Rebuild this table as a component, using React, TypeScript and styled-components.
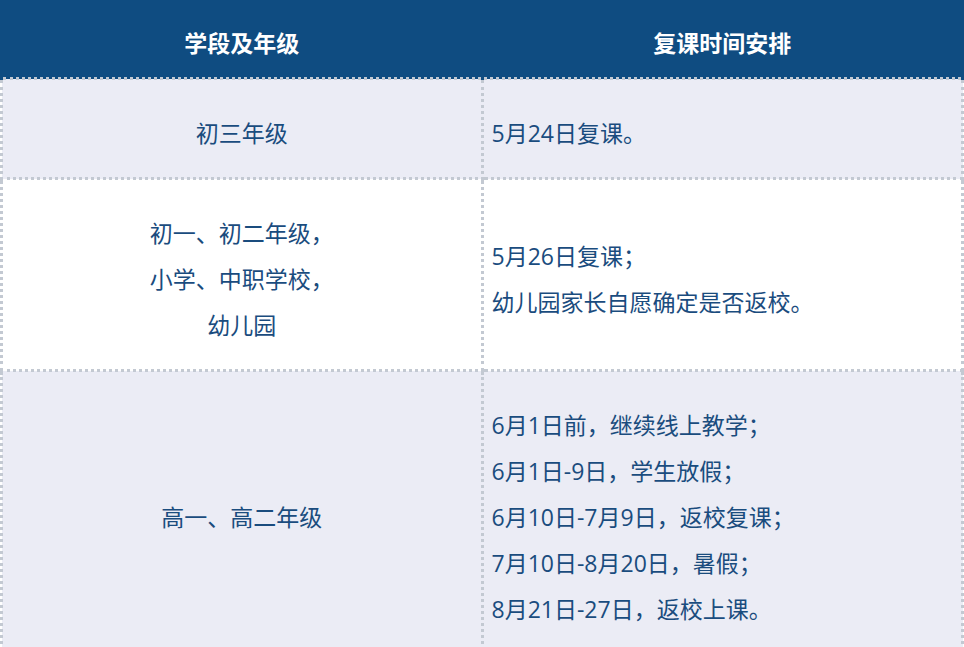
import styled, { createGlobalStyle } from 'styled-components';

const GlobalStyle = createGlobalStyle`
  html, body {
    margin: 0;
    padding: 0;
    background: #ffffff;
    overflow: hidden;
  }
  body {
    font-family: "Open Sans", "Noto Sans CJK SC", sans-serif;
  }
`;

const Table = styled.table`
  width: 964px;
  border-collapse: collapse;
  table-layout: fixed;
  font-size: 23px;
  color: #1a4c7e;
`;

const HeadCell = styled.th`
  height: 71px;
  padding: 6px 0 0;
  background: #0f4c81;
  color: #ffffff;
  font-weight: 700;
  text-align: center;
  vertical-align: middle;
  border-left: 3px solid #0f4c81;
  border-right: 3px solid #0f4c81;
  border-bottom: 3px dotted #c3c9d2;
`;

const Row = styled.tr<{ $shaded: boolean }>`
  background: ${p => (p.$shaded ? '#ebecf5' : '#ffffff')};
`;

const Cell = styled.td<{ $align: 'center' | 'left' }>`
  padding: 30px 8px 21px;
  line-height: 46px;
  text-align: ${p => p.$align};
  vertical-align: middle;
  border: 3px dotted #c3c9d2;
`;

const Line = styled.div``;

const rows = [
  { grade: ['初三年级'], plan: ['5月24日复课。'] },
  {
    grade: ['初一、初二年级，', '小学、中职学校，', '幼儿园'],
    plan: ['5月26日复课；', '幼儿园家长自愿确定是否返校。'],
  },
  {
    grade: ['高一、高二年级'],
    plan: [
      '6月1日前，继续线上教学；',
      '6月1日-9日，学生放假；',
      '6月10日-7月9日，返校复课；',
      '7月10日-8月20日，暑假；',
      '8月21日-27日，返校上课。',
    ],
  },
];

const App = () => (
  <>
    <GlobalStyle />
    <Table>
      <thead>
        <tr>
          <HeadCell>学段及年级</HeadCell>
          <HeadCell>复课时间安排</HeadCell>
        </tr>
      </thead>
      <tbody>
        {rows.map((r, i) => (
          <Row key={i} $shaded={i % 2 === 0}>
            <Cell $align="center">
              {r.grade.map(g => (
                <Line key={g}>{g}</Line>
              ))}
            </Cell>
            <Cell $align="left">
              {r.plan.map(p => (
                <Line key={p}>{p}</Line>
              ))}
            </Cell>
          </Row>
        ))}
      </tbody>
    </Table>
  </>
);

export default App;
